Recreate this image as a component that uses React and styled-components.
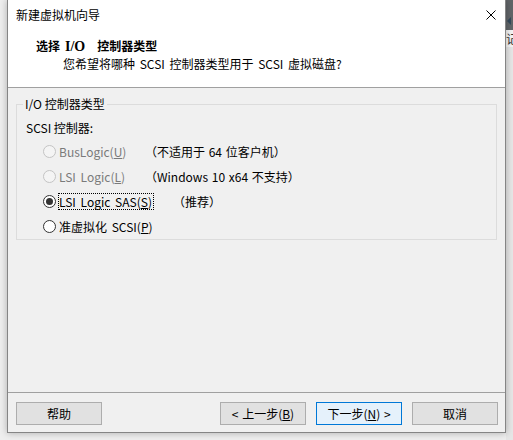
import React from "react";
import styled, { createGlobalStyle } from "styled-components";

const Global = createGlobalStyle`
  html, body { margin: 0; padding: 0; background: #ececec; }
  body { font-family: "Noto Sans CJK SC", "Noto Sans", sans-serif; font-size: 12px; color: #000; }
`;

const Page = styled.div`
  display: flex;
  width: 513px;
  height: 440px;
  overflow: hidden;
  background: #eeeeee;
`;

const Gutter = styled.div`
  width: 7px;
  flex: none;
`;

const Window = styled.div`
  position: relative;
  z-index: 1;
  flex: none;
  width: 499px;
  height: 433px;
  box-sizing: border-box;
  border: 1px solid #858585;
  border-top: none;
  background: #f0f0f0;
  display: flex;
  flex-direction: column;
  box-shadow: 0 0 7px rgba(0, 0, 0, 0.28);
`;

const Head = styled.div`
  height: 88px;
  box-sizing: border-box;
  background: #fff;
  border-bottom: 1px solid #a0a0a0;
  display: flex;
  flex-direction: column;
`;

const TitleBar = styled.div`
  height: 30px;
  display: flex;
  align-items: center;
  justify-content: space-between;
  padding: 0 9px 0 8px;
  line-height: 16px;
`;

const Heading = styled.div`
  margin: 8px 0 0 28px;
  line-height: 16px;
  font-family: "Noto Sans CJK SC", sans-serif;
  font-weight: bold;
  font-size: 12px;
  display: flex;
  align-items: baseline;
`;

const SerifPart = styled.span`
  font-family: "Liberation Serif", serif;
  font-size: 14px;
  margin: 0 12px 0 5px;
`;

const Sub = styled.div`
  margin: 1px 0 0 55px;
  line-height: 16px;
  word-spacing: 2px;
`;

const Body = styled.div`
  flex: 1;
  padding: 8px 8px 0;
`;

const Group = styled.fieldset`
  margin: 0;
  padding: 0;
  min-width: 0;
  border: 1px solid #dcdcdc;
`;

const Legend = styled.legend`
  margin-left: 6px;
  padding: 0 2px;
  line-height: 16px;
`;

const FieldLabel = styled.div`
  padding: 8px 0 0 9px;
  line-height: 16px;
`;

const Rows = styled.div`
  margin-top: 3px;
  padding-left: 26px;
  display: flex;
  flex-direction: column;
`;

const Row = styled.div`
  height: 25px;
  display: flex;
  align-items: center;
`;

const Option = styled.div`
  width: ${(p) => (p.$w ? `${p.$w}px` : "auto")};
  flex: none;
  display: flex;
  align-items: center;
  gap: 3px;
  color: ${(p) => (p.$disabled ? "#7a7a7a" : "#000")};
`;

const Radio = styled.span`
  width: 13px;
  height: 13px;
  box-sizing: border-box;
  border-radius: 50%;
  border: 1px solid ${(p) => (p.$disabled ? "#c4c4c4" : "#333")};
  background: ${(p) => (p.$disabled ? "#f4f4f4" : "#fff")};
  display: flex;
  align-items: center;
  justify-content: center;
  flex: none;
  &::after {
    content: "";
    display: ${(p) => (p.$checked ? "block" : "none")};
    width: 7px;
    height: 7px;
    border-radius: 50%;
    background: #333;
  }
`;

const OptText = styled.span`
  line-height: 15px;
  border: 1px dotted ${(p) => (p.$focus ? "#000" : "transparent")};
  padding: 0 1px 0 0;
  margin-left: -1px;
  white-space: nowrap;
  word-spacing: 2px;
`;

const Desc = styled.span`
  white-space: nowrap;
  line-height: 16px;
  word-spacing: 1px;
`;

const Footer = styled.div`
  height: 40px;
  box-sizing: border-box;
  border-top: 1px solid #a0a0a0;
  padding: 9px 7px 7px 8px;
  display: flex;
  gap: 10px;
`;

const Button = styled.button`
  width: 86px;
  height: 23px;
  box-sizing: border-box;
  padding: 0;
  margin: 0;
  margin-right: ${(p) => (p.$push ? "auto" : "0")};
  border: 1px solid ${(p) => (p.$default ? "#0078d7" : "#adadad")};
  background: ${(p) => (p.$default ? "#e5f1fb" : "#e1e1e1")};
  font-family: "Noto Sans CJK SC", "Noto Sans", sans-serif;
  font-size: 12px;
  line-height: 16px;
  color: #000;
  word-spacing: 1px;
`;

const Strip = styled.div`
  width: 7px;
  flex: none;
  display: flex;
  flex-direction: column;
  background: #e6e6e6;
  overflow: hidden;
`;

const StripTop = styled.div`
  height: 30px;
  background: #616568;
  display: flex;
  align-items: center;
  padding-top: 12px;
  box-sizing: border-box;
`;

const StripChar = styled.div`
  height: 17px;
  background: #f4f4f4;
  line-height: 17px;
  font-size: 12px;
  color: #333;
  white-space: nowrap;
`;

function Close() {
  return (
    <svg width="10" height="10" viewBox="0 0 10 10">
      <path d="M0.5 0.5 L9.5 9.5 M9.5 0.5 L0.5 9.5" stroke="#000" strokeWidth="1" fill="none" />
    </svg>
  );
}

const options = [
  { label: "BusLogic(", key: "U", disabled: true, w: 102, desc: "（不适用于 64 位客户机）" },
  { label: "LSI Logic(", key: "L", disabled: true, w: 102, desc: "（Windows 10 x64 不支持）" },
  { label: "LSI Logic SAS(", key: "S", checked: true, focus: true, w: 130, desc: "（推荐）" },
  { label: "准虚拟化 SCSI(", key: "P" },
];

export default function App() {
  return (
    <>
      <Global />
      <Page>
        <Gutter />
        <Window>
          <Head>
            <TitleBar>
              <span>新建虚拟机向导</span>
              <Close />
            </TitleBar>
            <Heading>
              <span>选择</span>
              <SerifPart>I/O</SerifPart>
              <span>控制器类型</span>
            </Heading>
            <Sub>您希望将哪种 SCSI 控制器类型用于 SCSI 虚拟磁盘?</Sub>
          </Head>
          <Body>
            <Group>
              <Legend>I/O 控制器类型</Legend>
              <FieldLabel>SCSI 控制器:</FieldLabel>
              <Rows>
                {options.map((o) => (
                  <Row key={o.key}>
                    <Option $w={o.w} $disabled={o.disabled}>
                      <Radio $disabled={o.disabled} $checked={o.checked} />
                      <OptText $focus={o.focus}>
                        {o.label}
                        <u>{o.key}</u>)
                      </OptText>
                    </Option>
                    {o.desc && <Desc>{o.desc}</Desc>}
                  </Row>
                ))}
              </Rows>
            </Group>
          </Body>
          <Footer>
            <Button $push>帮助</Button>
            <Button>
              &lt; 上一步(<u>B</u>)
            </Button>
            <Button $default>
              下一步(<u>N</u>) &gt;
            </Button>
            <Button>取消</Button>
          </Footer>
        </Window>
        <Strip>
          <StripTop>
            <svg width="7" height="10" viewBox="0 0 7 10">
              <path d="M1 5 L5 1 L5 9 Z" fill="#34495a" />
            </svg>
          </StripTop>
          <StripChar>记</StripChar>
        </Strip>
      </Page>
    </>
  );
}
